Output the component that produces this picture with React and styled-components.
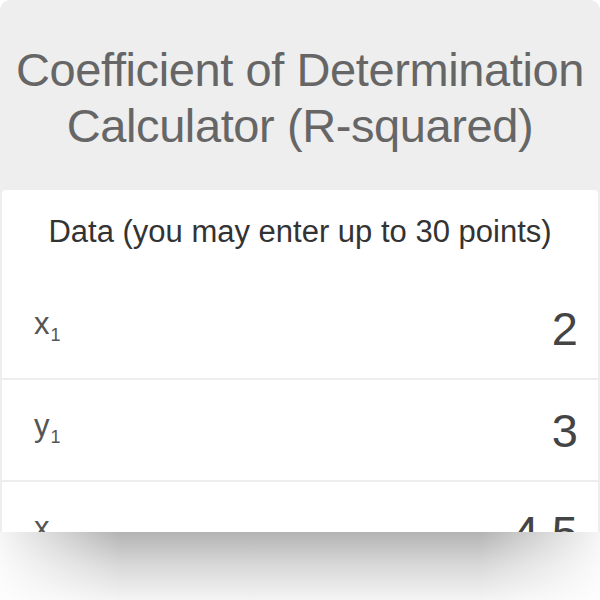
import React from "react";
import styled, { createGlobalStyle } from "styled-components";

const GlobalStyle = createGlobalStyle`
  html, body {
    margin: 0;
    padding: 0;
    background: #fff;
  }
  body {
    font-family: "Liberation Sans", Arial, Helvetica, sans-serif;
  }
`;

const Page = styled.div`
  width: 600px;
  height: 600px;
  display: flex;
  flex-direction: column;
  overflow: hidden;
`;

const Card = styled.div`
  height: 532px;
  background: #eeeeee;
  border-radius: 10px 10px 0 0;
  display: flex;
  flex-direction: column;
  overflow: hidden;
  flex-shrink: 0;
`;

const Title = styled.h1`
  margin: 0;
  padding: 42px 8px 36px;
  font-size: 47px;
  line-height: 56px;
  font-weight: 400;
  letter-spacing: -0.4px;
  color: #666;
  text-align: center;
`;

const Panel = styled.div`
  margin: 0 2px;
  background: #fff;
  border-radius: 4px 4px 0 0;
  flex: 1;
`;

const Heading = styled.div`
  height: 88px;
  box-sizing: border-box;
  padding-bottom: 4px;
  display: flex;
  align-items: center;
  justify-content: center;
  font-size: 31px;
  color: #333;
`;

const Row = styled.div`
  height: 100px;
  display: flex;
  align-items: center;
  justify-content: space-between;
  padding: 0 20px 0 32px;
  & + & {
    border-top: 2px solid #eeeeee;
  }
`;

const Label = styled.span`
  font-size: 31px;
  color: #555;
  padding-bottom: 4px;

  sub {
    font-size: 18px;
    vertical-align: -7px;
    margin-left: 1px;
  }
`;

const Value = styled.span`
  font-size: 47px;
  color: #444;
`;

const Shade = styled.div`
  height: 68px;
  flex-shrink: 0;
  background: linear-gradient(#b3b3b3, #d9d9d9 50%, #f4f4f4);
  -webkit-mask-image: linear-gradient(to right, rgba(0, 0, 0, 0.12), #000 120px, #000 480px, rgba(0, 0, 0, 0.12));
  mask-image: linear-gradient(to right, rgba(0, 0, 0, 0.12), #000 120px, #000 480px, rgba(0, 0, 0, 0.12));
`;

const points = [
  { name: "x", idx: 1, value: "2" },
  { name: "y", idx: 1, value: "3" },
  { name: "x", idx: 2, value: "4.5" },
  { name: "y", idx: 2, value: "6" },
];

export default function App() {
  return (
    <Page>
      <GlobalStyle />
      <Card>
        <Title>
          Coefficient of Determination
          <br />
          Calculator (R-squared)
        </Title>
        <Panel>
          <Heading>Data (you may enter up to 30 points)</Heading>
          {points.map(p => (
            <Row key={p.name + p.idx}>
              <Label>
                {p.name}
                <sub>{p.idx}</sub>
              </Label>
              <Value>{p.value}</Value>
            </Row>
          ))}
        </Panel>
      </Card>
      <Shade />
    </Page>
  );
}
